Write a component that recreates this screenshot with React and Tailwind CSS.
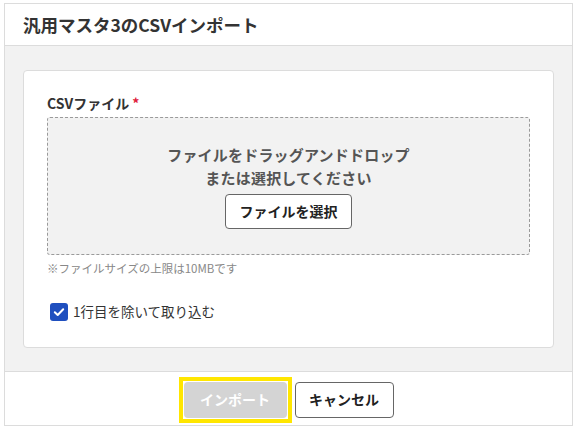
import React from "react";

export default function App() {
  return (
    <div
      className="w-[576px] h-[430px] bg-white pl-[4px] pt-[3px] text-[#333]"
      style={{ fontFamily: '"Noto Sans CJK JP", "Noto Sans", sans-serif' }}
    >
      <div className="w-[569px] h-[423px] border border-[#dcdcdc] flex flex-col">
        <div className="h-[42px] border-b border-[#dcdcdc] flex items-center px-[18px]">
          <h1 className="text-[17.5px] font-bold leading-none">汎用マスタ3のCSVインポート</h1>
        </div>

        <div className="flex-1 bg-[#f2f2f2] px-[18px] pt-[24px] pb-[23px] border-b border-[#dcdcdc]">
          <div className="bg-white border border-[#dcdcdc] rounded-[4px] px-[23px] pt-[22px] pb-[25px]">
            <div className="text-[14px] font-bold leading-[20px] mb-[4px]">
              CSVファイル<span className="text-[#e0203a] ml-[3px]">*</span>
            </div>

            <div className="border border-dashed border-[#9a9a9a] rounded-[3px] bg-[#f2f2f2] pt-[25px] pb-[25px] flex flex-col items-center">
              <p className="text-[15px] font-bold leading-[23px] text-[#555] tracking-[0.2px]">ファイルをドラッグアンドドロップ</p>
              <p className="text-[15px] font-bold leading-[23px] text-[#555] tracking-[0.2px]">または選択してください</p>
              <button className="mt-[5px] w-[127px] h-[35px] bg-white border border-[#666] rounded-[4px] text-[14px] font-bold text-[#222]">
                ファイルを選択
              </button>
            </div>

            <p className="mt-[4px] text-[11.5px] leading-[18px] text-[#888]">※ファイルサイズの上限は10MBです</p>

            <label className="mt-[25px] h-[20px] flex items-center gap-[5px] pl-[3px]">
              <span className="w-[18px] h-[18px] rounded-[3px] bg-[#1f4fbf] flex items-center justify-center">
                <svg width="12" height="12" viewBox="0 0 12 12" fill="none">
                  <path d="M1.8 6.2 L4.7 9 L10.2 3.2" stroke="white" strokeWidth="2" strokeLinecap="round" strokeLinejoin="round" />
                </svg>
              </span>
              <span className="text-[13.5px] leading-none text-[#333]">1行目を除いて取り込む</span>
            </label>
          </div>
        </div>

        <div className="h-[53px] flex items-center justify-center gap-[8px] pt-[2px]">
          <div className="-mx-[5px] border-[4px] border-[#ffe600] p-[1px]">
            <button className="block w-[103px] h-[36px] rounded-[4px] bg-[#d4d4d4] text-white text-[14px] font-bold">
              インポート
            </button>
          </div>
          <button className="w-[99px] h-[36px] rounded-[4px] bg-white border border-[#666] text-[14px] font-bold text-[#222]">
            キャンセル
          </button>
        </div>
      </div>
    </div>
  );
}
